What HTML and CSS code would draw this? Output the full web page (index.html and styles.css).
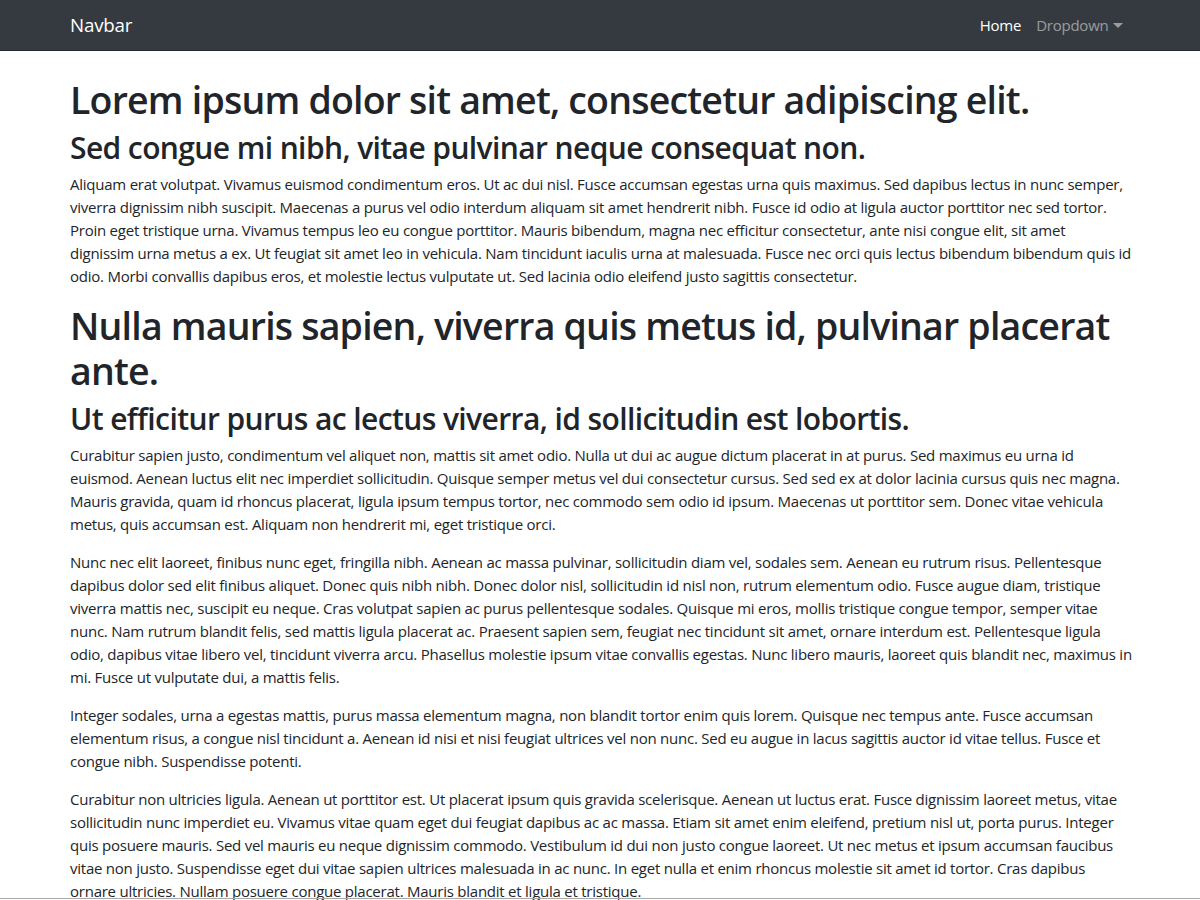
FILE: index.html
```html
<!DOCTYPE html>
<html lang="en">
<head>
<meta charset="utf-8">
<title>Navbar</title>
<link rel="stylesheet" href="styles.css">
</head>
<body>
<nav class="navbar">
  <div class="navbar-inner">
    <a class="brand" href="#">Navbar</a>
    <ul class="nav">
      <li><a class="nav-link active" href="#">Home</a></li>
      <li><a class="nav-link dropdown" href="#">Dropdown<span class="caret"></span></a></li>
    </ul>
  </div>
</nav>
<main class="container">
  <h1>Lorem ipsum dolor sit amet, consectetur adipiscing elit.</h1>
  <h2>Sed congue mi nibh, vitae pulvinar neque consequat non.</h2>
  <p>Aliquam erat volutpat. Vivamus euismod condimentum eros. Ut ac dui nisl. Fusce accumsan egestas urna quis maximus. Sed dapibus lectus in nunc semper, viverra dignissim nibh suscipit. Maecenas a purus vel odio interdum aliquam sit amet hendrerit nibh. Fusce id odio at ligula auctor porttitor nec sed tortor. Proin eget tristique urna. Vivamus tempus leo eu congue porttitor. Mauris bibendum, magna nec efficitur consectetur, ante nisi congue elit, sit amet dignissim urna metus a ex. Ut feugiat sit amet leo in vehicula. Nam tincidunt iaculis urna at malesuada. Fusce nec orci quis lectus bibendum bibendum quis id odio. Morbi convallis dapibus eros, et molestie lectus vulputate ut. Sed lacinia odio eleifend justo sagittis consectetur.</p>
  <h1>Nulla mauris sapien, viverra quis metus id, pulvinar placerat ante.</h1>
  <h2>Ut efficitur purus ac lectus viverra, id sollicitudin est lobortis.</h2>
  <p>Curabitur sapien justo, condimentum vel aliquet non, mattis sit amet odio. Nulla ut dui ac augue dictum placerat in at purus. Sed maximus eu urna id euismod. Aenean luctus elit nec imperdiet sollicitudin. Quisque semper metus vel dui consectetur cursus. Sed sed ex at dolor lacinia cursus quis nec magna. Mauris gravida, quam id rhoncus placerat, ligula ipsum tempus tortor, nec commodo sem odio id ipsum. Maecenas ut porttitor sem. Donec vitae vehicula metus, quis accumsan est. Aliquam non hendrerit mi, eget tristique orci.</p>
  <p>Nunc nec elit laoreet, finibus nunc eget, fringilla nibh. Aenean ac massa pulvinar, sollicitudin diam vel, sodales sem. Aenean eu rutrum risus. Pellentesque dapibus dolor sed elit finibus aliquet. Donec quis nibh nibh. Donec dolor nisl, sollicitudin id nisl non, rutrum elementum odio. Fusce augue diam, tristique viverra mattis nec, suscipit eu neque. Cras volutpat sapien ac purus pellentesque sodales. Quisque mi eros, mollis tristique congue tempor, semper vitae nunc. Nam rutrum blandit felis, sed mattis ligula placerat ac. Praesent sapien sem, feugiat nec tincidunt sit amet, ornare interdum est. Pellentesque ligula odio, dapibus vitae libero vel, tincidunt viverra arcu. Phasellus molestie ipsum vitae convallis egestas. Nunc libero mauris, laoreet quis blandit nec, maximus in mi. Fusce ut vulputate dui, a mattis felis.</p>
  <p>Integer sodales, urna a egestas mattis, purus massa elementum magna, non blandit tortor enim quis lorem. Quisque nec tempus ante. Fusce accumsan elementum risus, a congue nisl tincidunt a. Aenean id nisi et nisi feugiat ultrices vel non nunc. Sed eu augue in lacus sagittis auctor id vitae tellus. Fusce et congue nibh. Suspendisse potenti.</p>
  <p>Curabitur non ultricies ligula. Aenean ut porttitor est. Ut placerat ipsum quis gravida scelerisque. Aenean ut luctus erat. Fusce dignissim laoreet metus, vitae sollicitudin nunc imperdiet eu. Vivamus vitae quam eget dui feugiat dapibus ac ac massa. Etiam sit amet enim eleifend, pretium nisl ut, porta purus. Integer quis posuere mauris. Sed vel mauris eu neque dignissim commodo. Vestibulum id dui non justo congue laoreet. Ut nec metus et ipsum accumsan faucibus vitae non justo. Suspendisse eget dui vitae sapien ultrices malesuada in ac nunc. In eget nulla et enim rhoncus molestie sit amet id tortor. Cras dapibus ornare ultricies. Nullam posuere congue placerat. Mauris blandit et ligula et tristique.</p>
</main>
<div class="frame-edge"></div>
</body>
</html>
```
FILE: styles.css
```css
* { box-sizing: border-box; }
html { font-size: 15px; }
body {
  margin: 0;
  font-family: "Segoe UI", "Open Sans", "Noto Sans", sans-serif;
  font-size: 15px;
  line-height: 23px;
  color: #212529;
  background: #fff;
  letter-spacing: -0.24px;
}
.navbar {
  background: #343a40;
  height: 51px;
  border-bottom: 1px solid #25292d;
}
.navbar-inner {
  height: 50px;
  padding: 0 70px;
  display: flex;
  align-items: center;
  justify-content: space-between;
}
.brand {
  color: #fff;
  text-decoration: none;
  font-size: 18.75px;
  line-height: 28px;
  letter-spacing: -0.2px;
}
.nav {
  list-style: none;
  margin: 0;
  padding: 0;
  display: flex;
}
.nav-link {
  display: block;
  padding: 0 7.5px;
  text-decoration: none;
  color: rgba(255,255,255,.5);
  font-size: 15px;
}
.nav-link.active { color: #fff; }
.caret {
  display: inline-block;
  margin-left: 4px;
  vertical-align: 3px;
  border-top: 5px solid;
  border-left: 5px solid transparent;
  border-right: 5px solid transparent;
}
.container {
  padding: 26px 68px 0 70px;
}
h1 {
  margin: 0 0 7.5px;
  font-size: 37.5px;
  line-height: 45px;
  font-weight: 600;
  letter-spacing: -0.8px;
}
h2 {
  margin: 0 0 7.5px;
  font-size: 30px;
  line-height: 36px;
  font-weight: 600;
  letter-spacing: -0.6px;
}
p { margin: 0 0 15px; }
.frame-edge {
  position: fixed;
  left: 0;
  right: 0;
  bottom: 1px;
  height: 1px;
  background: #a9a9a9;
}
```
